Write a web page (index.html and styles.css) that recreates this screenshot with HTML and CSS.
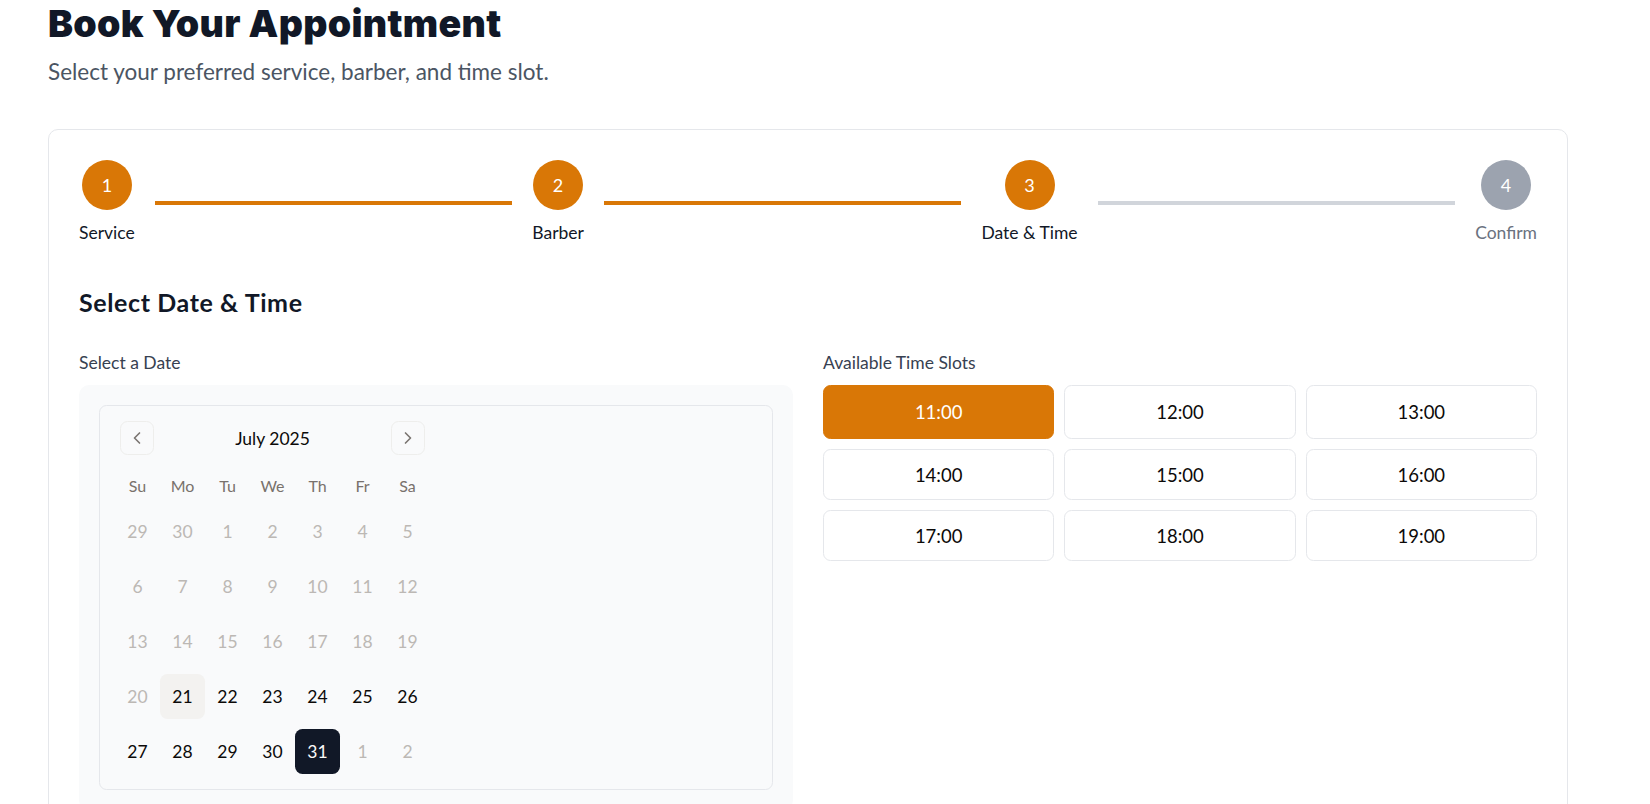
FILE: index.html
```html
<!DOCTYPE html>
<html lang="en">
<head>
<meta charset="utf-8">
<title>Book Your Appointment</title>
<link rel="stylesheet" href="styles.css">
</head>
<body>
<main class="page">
  <h1 class="title">Book Your Appointment</h1>
  <p class="subtitle">Select your preferred service, barber, and time slot.</p>

  <section class="card">
    <div class="stepper">
      <div class="step is-done">
        <div class="step-circle">1</div>
        <div class="step-label">Service</div>
      </div>
      <div class="step-line is-done"></div>
      <div class="step is-done">
        <div class="step-circle">2</div>
        <div class="step-label">Barber</div>
      </div>
      <div class="step-line is-done"></div>
      <div class="step is-done">
        <div class="step-circle">3</div>
        <div class="step-label">Date &amp; Time</div>
      </div>
      <div class="step-line"></div>
      <div class="step">
        <div class="step-circle">4</div>
        <div class="step-label">Confirm</div>
      </div>
    </div>

    <h2 class="section-title">Select Date &amp; Time</h2>

    <div class="columns">
      <div class="column">
        <div class="field-label">Select a Date</div>
        <div class="calendar-wrap">
          <div class="calendar">
            <div class="cal-body">
              <div class="cal-caption">
                <button class="cal-nav" aria-label="Previous month">
                  <svg viewBox="0 0 24 24" width="20" height="20" fill="none" stroke="currentColor" stroke-width="2" stroke-linecap="round" stroke-linejoin="round"><path d="m15 18-6-6 6-6"/></svg>
                </button>
                <div class="cal-month">July 2025</div>
                <button class="cal-nav" aria-label="Next month">
                  <svg viewBox="0 0 24 24" width="20" height="20" fill="none" stroke="currentColor" stroke-width="2" stroke-linecap="round" stroke-linejoin="round"><path d="m9 18 6-6-6-6"/></svg>
                </button>
              </div>
              <div class="cal-grid">
                <div class="cal-head">Su</div><div class="cal-head">Mo</div><div class="cal-head">Tu</div><div class="cal-head">We</div><div class="cal-head">Th</div><div class="cal-head">Fr</div><div class="cal-head">Sa</div>

                <div class="cal-day is-off">29</div><div class="cal-day is-off">30</div><div class="cal-day is-off">1</div><div class="cal-day is-off">2</div><div class="cal-day is-off">3</div><div class="cal-day is-off">4</div><div class="cal-day is-off">5</div>
                <div class="cal-day is-off">6</div><div class="cal-day is-off">7</div><div class="cal-day is-off">8</div><div class="cal-day is-off">9</div><div class="cal-day is-off">10</div><div class="cal-day is-off">11</div><div class="cal-day is-off">12</div>
                <div class="cal-day is-off">13</div><div class="cal-day is-off">14</div><div class="cal-day is-off">15</div><div class="cal-day is-off">16</div><div class="cal-day is-off">17</div><div class="cal-day is-off">18</div><div class="cal-day is-off">19</div>
                <div class="cal-day is-off">20</div><div class="cal-day is-today">21</div><div class="cal-day">22</div><div class="cal-day">23</div><div class="cal-day">24</div><div class="cal-day">25</div><div class="cal-day">26</div>
                <div class="cal-day">27</div><div class="cal-day">28</div><div class="cal-day">29</div><div class="cal-day">30</div><div class="cal-day is-selected">31</div><div class="cal-day is-off">1</div><div class="cal-day is-off">2</div>
              </div>
            </div>
          </div>
        </div>
      </div>

      <div class="column">
        <div class="field-label">Available Time Slots</div>
        <div class="slots">
          <button class="slot is-selected">11:00</button>
          <button class="slot">12:00</button>
          <button class="slot">13:00</button>
          <button class="slot">14:00</button>
          <button class="slot">15:00</button>
          <button class="slot">16:00</button>
          <button class="slot">17:00</button>
          <button class="slot">18:00</button>
          <button class="slot">19:00</button>
        </div>
      </div>
    </div>
  </section>
</main>
</body>
</html>
```

FILE: styles.css
```css
* {
  box-sizing: border-box;
}

html, body {
  margin: 0;
  background: #ffffff;
}

body {
  font-family: "Lato", "Noto Sans", "Liberation Sans", sans-serif;
  color: #111827;
  overflow: hidden;
}

.page {
  padding: 0 0 0 48px;
  width: 1568px;
}

.title {
  margin: 0;
  font-family: "Inter", "Lato", sans-serif;
  font-size: 37.5px;
  line-height: 47px;
  font-weight: 900;
  color: #111827;
  letter-spacing: 0.3px;
}

.subtitle {
  margin: 7px 0 0;
  font-size: 22.5px;
  line-height: 35px;
  color: #4b5563;
}

.card {
  margin-top: 40px;
  border: 1px solid #e5e7eb;
  border-radius: 10px;
  padding: 30px 30px 60px;
  background: #fff;
}

/* Stepper */
.stepper {
  display: flex;
  align-items: center;
}

.step {
  display: flex;
  flex-direction: column;
  align-items: center;
  flex: none;
}

.step-circle {
  width: 50px;
  height: 50px;
  border-radius: 50%;
  background: #9ca3af;
  color: #fff;
  display: flex;
  align-items: center;
  justify-content: center;
  font-size: 18px;
}

.step.is-done .step-circle {
  background: #d97706;
}

.step-label {
  margin-top: 10px;
  font-size: 17.5px;
  line-height: 25px;
  color: #6b7280;
  white-space: nowrap;
}

.step.is-done .step-label {
  color: #111827;
}

.step-line {
  flex: 1;
  height: 4px;
  margin: 0 20px;
  background: #d1d5db;
}

.step-line.is-done {
  background: #d97706;
}

/* Section */
.section-title {
  margin: 40px 0 30px;
  font-size: 25px;
  line-height: 35px;
  font-weight: 700;
  letter-spacing: 0.6px;
  color: #111827;
}

.columns {
  display: grid;
  grid-template-columns: 1fr 1fr;
  column-gap: 30px;
}

.field-label {
  font-size: 17.5px;
  line-height: 25px;
  color: #374151;
  margin-bottom: 10px;
}

/* Calendar */
.calendar-wrap {
  background: #f9fafb;
  border-radius: 10px;
  padding: 20px;
}

.calendar {
  border: 1px solid #e5e7eb;
  border-radius: 7.5px;
  padding: 15px;
}

.cal-body {
  width: 315px;
}

.cal-caption {
  display: flex;
  align-items: center;
  justify-content: space-between;
  padding: 0 5px;
  height: 34px;
}

.cal-nav {
  width: 34px;
  height: 34px;
  padding: 0;
  border: 1px solid #eeeeec;
  border-radius: 7.5px;
  background: transparent;
  color: #7a7571;
  display: flex;
  align-items: center;
  justify-content: center;
}

.cal-month {
  font-size: 17.5px;
  line-height: 25px;
  font-weight: 400;
  color: #0c0a09;
}

.cal-grid {
  margin-top: 16px;
  display: grid;
  grid-template-columns: repeat(7, 45px);
  grid-template-rows: 28px;
  grid-auto-rows: 45px;
  row-gap: 10px;
}

.cal-head {
  display: flex;
  align-items: center;
  justify-content: center;
  font-size: 16px;
  color: #78716c;
}

.cal-day {
  display: flex;
  align-items: center;
  justify-content: center;
  font-size: 17.5px;
  color: #0c0a09;
  border-radius: 7.5px;
}

.cal-day.is-off {
  color: #bcb8b4;
}

.cal-day.is-today {
  background: #f3f2f0;
}

.cal-day.is-selected {
  background: #111827;
  color: #fafaf9;
}

/* Time slots */
.slots {
  display: grid;
  grid-template-columns: repeat(3, 1fr);
  grid-template-rows: 54px 51px 51px;
  gap: 10px;
}

.slot {
  font-family: inherit;
  font-size: 18.5px;
  color: #0c0a09;
  background: #fff;
  border: 1px solid #e5e7eb;
  border-radius: 7.5px;
  padding: 0;
}

.slot.is-selected {
  background: #d97706;
  border-color: #d97706;
  color: #fff;
}
```
